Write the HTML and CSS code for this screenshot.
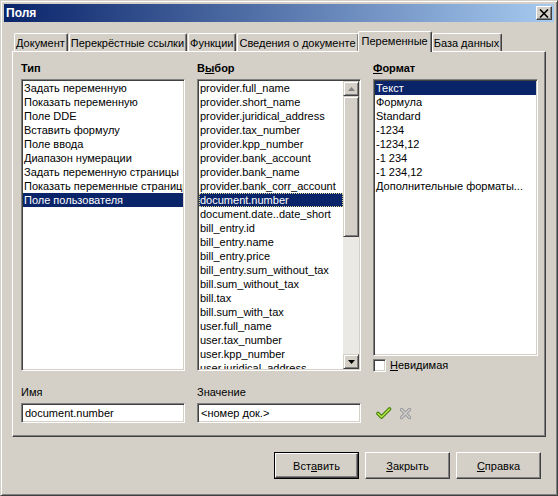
FILE: index.html
```html
<!DOCTYPE html>
<html lang="ru">
<head>
<meta charset="utf-8">
<title>Поля</title>
<link rel="stylesheet" href="styles.css">
</head>
<body>
<div class="window">
  <div class="titlebar">
    <span class="title">Поля</span>
    <span class="close"><svg width="10" height="9" viewBox="0 0 10 9"><path d="M1 0.5 L9 8.5 M9 0.5 L1 8.5" stroke="#000" stroke-width="1.6"/></svg></span>
  </div>
  <div class="client">
    <div class="tabs">
      <div class="tab">Документ</div>
      <div class="tab">Перекрёстные ссылки</div>
      <div class="tab">Функции</div>
      <div class="tab">Сведения о документе</div>
      <div class="tab active">Переменные</div>
      <div class="tab">База данных</div>
    </div>
    <div class="panel">
      <div class="columns">
        <div class="col">
          <div class="label">Тип</div>
          <div class="list tall">
            <div class="item">Задать переменную</div>
            <div class="item">Показать переменную</div>
            <div class="item">Поле DDE</div>
            <div class="item">Вставить формулу</div>
            <div class="item">Поле ввода</div>
            <div class="item">Диапазон нумерации</div>
            <div class="item">Задать переменную страницы</div>
            <div class="item">Показать переменные страницы</div>
            <div class="item sel">Поле пользователя</div>
          </div>
        </div>
        <div class="col">
          <div class="label">В<u>ы</u>бор</div>
          <div class="list tall scroll">
            <div class="items">
              <div class="item">provider.full_name</div>
              <div class="item">provider.short_name</div>
              <div class="item">provider.juridical_address</div>
              <div class="item">provider.tax_number</div>
              <div class="item">provider.kpp_number</div>
              <div class="item">provider.bank_account</div>
              <div class="item">provider.bank_name</div>
              <div class="item">provider.bank_corr_account</div>
              <div class="item sel focus">document.number</div>
              <div class="item">document.date..date_short</div>
              <div class="item">bill_entry.id</div>
              <div class="item">bill_entry.name</div>
              <div class="item">bill_entry.price</div>
              <div class="item">bill_entry.sum_without_tax</div>
              <div class="item">bill.sum_without_tax</div>
              <div class="item">bill.tax</div>
              <div class="item">bill.sum_with_tax</div>
              <div class="item">user.full_name</div>
              <div class="item">user.tax_number</div>
              <div class="item">user.kpp_number</div>
              <div class="item">user.juridical_address</div>
            </div>
            <div class="scrollbar">
              <div class="sbtn"><svg width="7" height="4" viewBox="0 0 7 4"><path d="M3.5 0 L7 4 L0 4 Z" fill="#808080"/></svg></div>
              <div class="thumb"></div>
              <div class="track"></div>
              <div class="sbtn"><svg width="7" height="4" viewBox="0 0 7 4"><path d="M0 0 L7 0 L3.5 4 Z" fill="#000"/></svg></div>
            </div>
          </div>
        </div>
        <div class="col">
          <div class="label"><u>Ф</u>ормат</div>
          <div class="list short">
            <div class="item sel">Текст</div>
            <div class="item">Формула</div>
            <div class="item">Standard</div>
            <div class="item">-1234</div>
            <div class="item">-1234,12</div>
            <div class="item">-1 234</div>
            <div class="item">-1 234,12</div>
            <div class="item">Дополнительные форматы...</div>
          </div>
          <div class="checkrow">
            <span class="checkbox"></span>
            <span class="checklabel"><u>Н</u>евидимая</span>
          </div>
        </div>
      </div>
      <div class="fields">
        <div class="field">
          <div class="flabel">Имя</div>
          <div class="input">document.number</div>
        </div>
        <div class="field">
          <div class="flabel">Значение</div>
          <div class="input">&lt;номер док.&gt;</div>
        </div>
        <div class="icons">
          <svg width="16" height="14" viewBox="0 0 16 14"><path d="M2 7.5 L5.5 11 L13.5 3" fill="none" stroke="#3f7a00" stroke-width="3.6" stroke-linejoin="round" stroke-linecap="round"/><path d="M2 7.5 L5.5 11 L13.5 3" fill="none" stroke="#b6e84a" stroke-width="1.6" stroke-linejoin="round" stroke-linecap="round"/></svg>
          <svg width="13" height="13" viewBox="0 0 13 13"><path d="M2.5 2.5 L10.5 10.5 M10.5 2.5 L2.5 10.5" stroke="#9a9a9a" stroke-width="3.4" stroke-linecap="round"/><path d="M2.5 2.5 L10.5 10.5 M10.5 2.5 L2.5 10.5" stroke="#d0d0d0" stroke-width="1.4" stroke-linecap="round"/></svg>
        </div>
      </div>
    </div>
    <div class="buttons">
      <div class="btn default"><span class="btnface">Вст<u>а</u>вить</span></div>
      <div class="btn"><span class="btnface"><u>З</u>акрыть</span></div>
      <div class="btn"><span class="btnface"><u>С</u>правка</span></div>
    </div>
  </div>
</div>
</body>
</html>
```
FILE: styles.css
```css
html, body {
  margin: 0;
  padding: 0;
  background: #d4d0c8;
}
body {
  font-family: "Liberation Sans", Arial, sans-serif;
  font-size: 11px;
  color: #000;
}
u { text-decoration: underline; text-underline-offset: 1px; }

.window {
  width: 558px;
  height: 496px;
  box-sizing: border-box;
  border: 1px solid;
  border-color: #d4d0c8 #404040 #404040 #d4d0c8;
  box-shadow: inset 1px 1px #ffffff, inset -1px -1px #808080;
  padding: 3px;
  background: #d4d0c8;
}

.titlebar {
  height: 18px;
  display: flex;
  align-items: center;
  justify-content: space-between;
  padding: 0 2px 0 2px;
  background: linear-gradient(to right, #0a246a, #a6caf0);
}
.title {
  color: #fff;
  font-weight: bold;
  font-size: 12px;
  line-height: 18px;
}
.close {
  width: 16px;
  height: 14px;
  box-sizing: border-box;
  background: #d4d0c8;
  border: 1px solid;
  border-color: #fff #404040 #404040 #fff;
  box-shadow: inset -1px -1px #808080;
  display: flex;
  align-items: center;
  justify-content: center;
}

.client {
  padding: 9px 8px 0 8px;
}

.tabs {
  display: flex;
  align-items: flex-end;
  height: 20px;
  padding-left: 2px;
}
.tab {
  height: 18px;
  box-sizing: border-box;
  padding: 0 2px 0 1px;
  border: 1px solid;
  border-bottom: none;
  border-color: #fff #404040 transparent #fff;
  box-shadow: inset -1px 0 #808080;
  border-radius: 2px 2px 0 0;
  line-height: 18px;
  white-space: nowrap;
}
.tab + .tab { margin-left: 1px; }
.tab.active {
  height: 21px;
  margin-bottom: -1px;
  margin-left: -1px;
  margin-right: -2px;
  padding: 0 3px 0 3px;
  line-height: 18px;
  background: #d4d0c8;
  position: relative;
  z-index: 1;
}
.tab.active + .tab { margin-left: 2px; }

.panel {
  height: 386px;
  box-sizing: border-box;
  border: 1px solid;
  border-color: #fff #404040 #404040 #fff;
  box-shadow: inset -1px -1px #808080;
  padding: 9px 7px 13px 8px;
}

.columns {
  display: flex;
  gap: 12px;
}
.col {
  width: 164px;
  display: flex;
  flex-direction: column;
}
.col:last-child { width: 165px; }
.label {
  font-weight: bold;
  line-height: 14px;
  margin-bottom: 4px;
}

.list {
  box-sizing: border-box;
  background: #fff;
  border: 1px solid;
  border-color: #808080 #fff #fff #808080;
  box-shadow: inset 1px 1px #404040, inset -1px -1px #d4d0c8;
  padding: 1px;
  overflow: hidden;
}
.list.tall { height: 292px; }
.list.short { height: 277px; }
.list.scroll {
  display: flex;
}
.items {
  flex: 1;
  overflow: hidden;
  min-width: 0;
}
.item {
  line-height: 14px;
  height: 14px;
  padding-left: 1px;
  white-space: nowrap;
  overflow: hidden;
}
.item.sel {
  background: #0a246a;
  color: #fff;
}
.item.focus {
  outline: 1px dotted #e0d890;
  outline-offset: -1px;
}

.scrollbar {
  width: 16px;
  display: flex;
  flex-direction: column;
  background: #ebe9e4;
}
.sbtn {
  height: 15px;
  box-sizing: border-box;
  background: #d4d0c8;
  border: 1px solid;
  border-color: #d4d0c8 #404040 #404040 #d4d0c8;
  box-shadow: inset 1px 1px #fff, inset -1px -1px #808080;
  display: flex;
  align-items: center;
  justify-content: center;
}
.thumb {
  height: 141px;
  box-sizing: border-box;
  background: #d4d0c8;
  border: 1px solid;
  border-color: #d4d0c8 #404040 #404040 #d4d0c8;
  box-shadow: inset 1px 1px #fff, inset -1px -1px #808080;
}
.track { flex: 1; }

.checkrow {
  display: flex;
  align-items: center;
  margin-top: 3px;
  height: 13px;
}
.checkbox {
  width: 13px;
  height: 13px;
  box-sizing: border-box;
  background: #fff;
  border: 1px solid;
  border-color: #808080 #fff #fff #808080;
  box-shadow: inset 1px 1px #404040, inset -1px -1px #d4d0c8;
}
.checklabel {
  margin-left: 4px;
  line-height: 13px;
}

.fields {
  display: flex;
  gap: 12px;
  margin-top: 13px;
  align-items: flex-end;
}
.field {
  width: 164px;
}
.flabel {
  line-height: 14px;
  margin-bottom: 4px;
}
.input {
  height: 20px;
  box-sizing: border-box;
  background: #fff;
  border: 1px solid;
  border-color: #808080 #fff #fff #808080;
  box-shadow: inset 1px 1px #404040, inset -1px -1px #d4d0c8;
  padding: 0 3px;
  line-height: 18px;
  white-space: nowrap;
}
.icons {
  display: flex;
  align-items: center;
  gap: 7px;
  height: 20px;
  padding-left: 3px;
}

.buttons {
  display: flex;
  justify-content: flex-end;
  gap: 6px;
  margin-top: 15px;
  padding-right: 5px;
}
.btn {
  width: 85px;
  height: 27px;
  box-sizing: border-box;
  border: 1px solid;
  border-color: #fff #404040 #404040 #fff;
  box-shadow: inset -1px -1px #808080;
  display: flex;
}
.btnface {
  flex: 1;
  display: flex;
  align-items: center;
  justify-content: center;
}
.btn.default {
  border: 1px solid #000;
  box-shadow: none;
}
.btn.default .btnface {
  border: 1px solid;
  border-color: #fff #404040 #404040 #fff;
  box-shadow: inset -1px -1px #808080;
}
```
